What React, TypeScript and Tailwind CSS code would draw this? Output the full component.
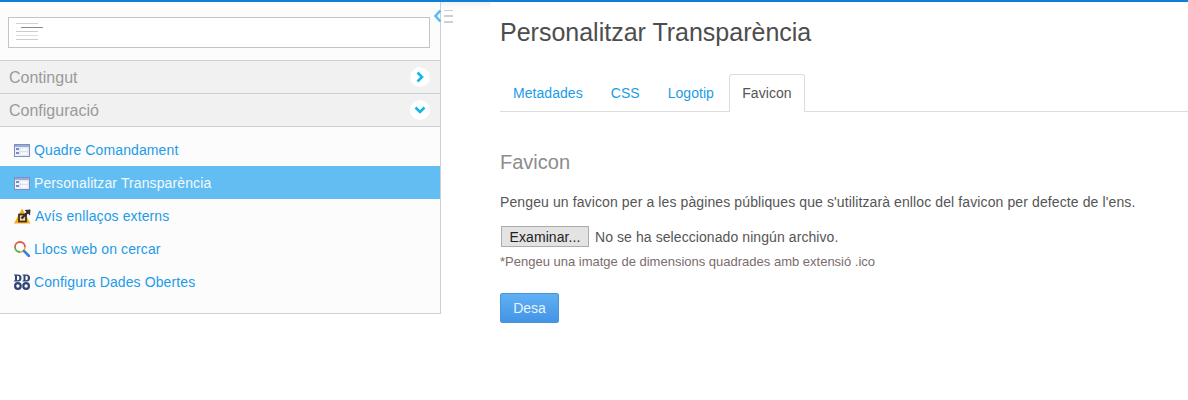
import React from 'react';

const FormIcon = () => (
  <svg width="16" height="14" viewBox="0 0 16 14" className="shrink-0">
    <rect x="0.5" y="1.5" width="15" height="12" fill="#eef2f8" stroke="#7b90c0" />
    <rect x="1" y="2" width="14" height="2" fill="#9badd6" />
    <rect x="2" y="5" width="3" height="2" fill="#6f8ccb" />
    <rect x="2" y="9" width="3" height="2" fill="#6f8ccb" />
    <rect x="6" y="5" width="8" height="3" fill="#fff" stroke="#c2cadd" strokeWidth="0.5" />
    <rect x="6" y="9" width="8" height="3" fill="#fff" stroke="#c2cadd" strokeWidth="0.5" />
  </svg>
);

const WarningIcon = () => (
  <svg width="17" height="16" viewBox="0 0 17 16" className="shrink-0">
    <path d="M8 0.5 L16.5 15.5 L0 15.5 Z" fill="#f5ab1d" />
    <rect x="5" y="6.5" width="7" height="7" fill="#f7d98a" stroke="#3a2f22" strokeWidth="1.7" />
    <path d="M7.5 10.5 L14 4" stroke="#2f2f33" strokeWidth="2.4" />
    <path d="M10.5 2 L16.5 1.5 L16 7.5 Z" fill="#2f2f33" />
  </svg>
);

const SearchIcon = () => (
  <svg width="16" height="16" viewBox="0 0 16 16" className="shrink-0">
    <path d="M6 1 A5 5 0 0 1 11 6" fill="none" stroke="#e2574c" strokeWidth="1.8" />
    <path d="M11 6 A5 5 0 0 1 6 11" fill="none" stroke="#e8b93c" strokeWidth="1.8" />
    <path d="M6 11 A5 5 0 0 1 1 6" fill="none" stroke="#5aa84f" strokeWidth="1.8" />
    <path d="M1 6 A5 5 0 0 1 6 1" fill="none" stroke="#d9653f" strokeWidth="1.8" />
    <path d="M10 10 L15 15" stroke="#3f7fd8" strokeWidth="2.6" strokeLinecap="round" />
  </svg>
);

const OpenDataIcon = () => (
  <svg width="16" height="16" viewBox="0 0 16 16" className="shrink-0">
    <path d="M0 0.5 H4 Q7.5 0.5 7.5 4 Q7.5 7.5 4 7.5 H0 V6.5 H1 V1.5 H0 Z M3 1.8 V6.2 H3.8 Q5.4 6.2 5.4 4 Q5.4 1.8 3.8 1.8 Z" fill="#2f4474" fillRule="evenodd" />
    <path d="M8.5 0.5 H12.5 Q16 0.5 16 4 Q16 7.5 12.5 7.5 H8.5 V6.5 H9.5 V1.5 H8.5 Z M11.5 1.8 V6.2 H12.3 Q13.9 6.2 13.9 4 Q13.9 1.8 12.3 1.8 Z" fill="#2f4474" fillRule="evenodd" />
    <circle cx="3.9" cy="12" r="2.8" fill="none" stroke="#2f4474" strokeWidth="2.2" />
    <circle cx="12.1" cy="12" r="2.8" fill="none" stroke="#2f4474" strokeWidth="2.2" />
  </svg>
);

const Chevron = ({ down }: { down?: boolean }) => (
  <span className="flex h-5 w-5 items-center justify-center rounded-full bg-white">
    <svg width="12" height="12" viewBox="0 0 12 12">
      <path
        d={down ? 'M1.5 3.5 L6 8 L10.5 3.5' : 'M3.5 1.5 L8 6 L3.5 10.5'}
        fill="none"
        stroke="#17b5e6"
        strokeWidth="2.6"
      />
    </svg>
  </span>
);

const AccordionHeader = ({ label, down }: { label: string; down?: boolean }) => (
  <div className="flex h-[33px] items-center justify-between border-b border-[#cfcfcf] bg-[#f1f1f1] pl-[9px] pr-[10px] text-[16px] text-[#9a9a9a]">
    <span className="pt-[2px]">{label}</span>
    <Chevron down={down} />
  </div>
);

const items = [
  { label: 'Quadre Comandament', icon: <FormIcon /> },
  { label: 'Personalitzar Transparència', icon: <FormIcon />, active: true },
  { label: 'Avís enllaços externs', icon: <WarningIcon /> },
  { label: 'Llocs web on cercar', icon: <SearchIcon /> },
  { label: 'Configura Dades Obertes', icon: <OpenDataIcon /> },
];

const Sidebar = () => (
  <aside className="relative h-[312px] w-[441px] shrink-0 border-r border-b border-[#cfcfcf] bg-[#fcfcfc]">
    <div className="h-[59px] border-b border-[#cfcfcf] px-2 pt-[15px]">
      <div className="relative h-[31px] w-[422px] border border-[#c4c4c4] bg-white">
        <svg width="28" height="20" viewBox="0 0 28 20" className="absolute left-[7px] top-[5px]">
          <rect x="0" y="0" width="22" height="1" fill="#d2d2d2" />
          <rect x="5" y="4" width="22" height="1" fill="#8a8a8a" />
          <rect x="0" y="8" width="22" height="1" fill="#cccccc" />
          <rect x="0" y="12" width="22" height="1" fill="#dddddd" />
          <rect x="0" y="16" width="22" height="1" fill="#cccccc" />
        </svg>
      </div>
    </div>
    <AccordionHeader label="Contingut" />
    <AccordionHeader label="Configuració" down />
    <ul className="pt-[6px]">
      {items.map((item) => (
        <li
          key={item.label}
          className={`flex h-[33px] items-center gap-1 pl-[14px] text-[14px] tracking-[0.11px] ${
            item.active ? 'bg-[#62bdf2] text-[#f2f9fd]' : 'text-[#1d9be8]'
          }`}
        >
          {item.icon}
          <span className="pt-[2px]">{item.label}</span>
        </li>
      ))}
    </ul>
    <div className="absolute left-[434px] top-[7px] flex items-center gap-[2px]">
      <svg width="8" height="14" viewBox="0 0 8 14">
        <path d="M6.5 1.5 L1.5 7 L6.5 12.5" fill="none" stroke="#56bdf0" strokeWidth="2.6" />
      </svg>
      <div className="flex w-[9px] flex-col gap-1">
        <div className="h-[2px] bg-[#cfcfcf]" />
        <div className="h-[2px] bg-[#cfcfcf]" />
        <div className="h-[2px] bg-[#cfcfcf]" />
      </div>
    </div>
  </aside>
);

const tabs = ['Metadades', 'CSS', 'Logotip'];

const Main = () => (
  <main className="relative flex-1 pl-[59px] text-[#555555]">
    <div className="absolute left-0 top-0 h-2 w-[50px] bg-gradient-to-b from-[#f3f3f3] to-white" />
    <h1 className="pt-[17px] text-[25px] leading-[27px] text-[#4d4d4d]">Personalitzar Transparència</h1>
    <div className="mt-[28px] flex h-[38px] items-end border-b border-[#dddddd] tracking-[0.05px]">
      {tabs.map((tab) => (
        <a key={tab} className="mr-[2px] flex h-[37px] items-center px-[13px] pt-[1px] text-[14px] text-[#1d9be8]">
          {tab}
        </a>
      ))}
      <a className="-mb-px flex h-[38px] w-[76px] items-center justify-center rounded-t-[3px] border border-b-0 border-[#dddddd] bg-white text-[14px] text-[#555555]">
        Favicon
      </a>
    </div>
    <h2 className="mt-[38px] text-[20px] leading-[24px] text-[#8c8c8c]">Favicon</h2>
    <p className="mt-[18px] text-[14px] leading-[20px] tracking-[0.11px] text-[#555555]">
      Pengeu un favicon per a les pàgines públiques que s'utilitzarà enlloc del favicon per defecte de l'ens.
    </p>
    <div className="mt-[14px] flex items-center gap-[6px] text-[14px] leading-[20px] tracking-[0.08px]">
      <span className="ml-px flex h-[21px] w-[88px] items-center justify-center border border-[#acacac] bg-[#e3e3e3] text-[14px] text-[#222222]">
        Examinar...
      </span>
      No se ha seleccionado ningún archivo.
    </div>
    <p className="mt-[6px] text-[13px] leading-[18px] text-[#7a6c6c]">
      *Pengeu una imatge de dimensions quadrades amb extensió .ico
    </p>
    <button className="mt-[22px] flex h-[30px] w-[59px] items-center justify-center rounded-[2px] border border-[#4a94d8] bg-gradient-to-b from-[#5fb0f3] to-[#4394e6] text-[14px] text-[#e8f3fc]">
      Desa
    </button>
  </main>
);

export default function App() {
  return (
    <div className="h-[400px] w-[1188px] overflow-hidden bg-white font-['Liberation_Sans',Arial,sans-serif]">
      <div className="h-[2px] bg-[#0f7fd6]" />
      <div className="flex">
        <Sidebar />
        <Main />
      </div>
    </div>
  );
}
